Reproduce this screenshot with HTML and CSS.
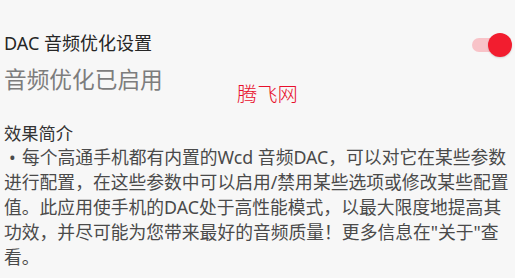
FILE: index.html
```html
<!DOCTYPE html>
<html lang="zh">

<head>
    <meta charset="UTF-8">
    <meta name="viewport" content="width=device-width, initial-scale=1.0">
    <title>DAC 音频优化设置</title>
    <link rel="stylesheet" href="styles.css">
</head>

<body>
    <section class="setting">
        <div class="setting-row">
            <h2 class="setting-title">DAC 音频优化设置</h2>
            <span class="switch on"><span class="thumb"></span></span>
        </div>
        <div class="status">音频优化已启用</div>
        <div class="watermark">腾飞网</div>
    </section>
    <section class="intro">
        <h3 class="intro-title">效果简介</h3>
        <p class="intro-text"><span class="bullet">•</span>每个高通手机都有内置的Wcd 音频DAC，可以对它在某些参数<br>进行配置，在这些参数中可以启用/禁用某些选项或修改某些配置<br>值。此应用使手机的DAC处于高性能模式，以最大限度地提高其<br>功效，并尽可能为您带来最好的音频质量！更多信息在"关于"查<br>看。</p>
    </section>
</body>

</html>
```
FILE: styles.css
```css
* {
    padding: 0;
    margin: 0;
    box-sizing: border-box;
}

body {
    background-color: #f7f7f7;
    font-family: "Noto Sans", "Noto Sans CJK SC", sans-serif;
    color: #222;
    width: 515px;
    height: 278px;
    overflow: hidden;
}

.setting {
    padding: 30px 0 0 4px;
}

.setting-row {
    display: flex;
    align-items: center;
    justify-content: space-between;
    padding-right: 3px;
    height: 24px;
}

.setting-title {
    font-size: 18px;
    font-weight: 400;
    color: #262626;
}

.switch {
    position: relative;
    display: inline-block;
    width: 40px;
    height: 14px;
    margin-top: 6px;
}

.switch::before {
    content: "";
    position: absolute;
    left: 0;
    top: 0;
    width: 30px;
    height: 14px;
    border-radius: 7px;
    background-color: #f8c3c8;
}

.switch .thumb {
    position: absolute;
    right: 0;
    top: -5px;
    width: 24px;
    height: 24px;
    border-radius: 50%;
    background-color: #f21d2f;
    box-shadow: 0 1px 2px rgba(0, 0, 0, 0.15);
}

.status {
    font-size: 22.7px;
    color: #7d7d7d;
    margin-top: 10px;
    line-height: 32px;
}

.watermark {
    font-family: "Noto Sans CJK SC", serif;
    font-weight: 300;
    font-size: 20.3px;
    color: #e8102c;
    margin: -17px 0 0 233px;
    line-height: 28px;
}

.intro {
    padding: 16px 0 0 4px;
}

.intro-title {
    font-size: 17.3px;
    font-weight: 400;
    color: #333;
    line-height: 22px;
}

.intro-text {
    font-size: 17.8px;
    color: #4a4a4a;
    line-height: 25px;
    white-space: nowrap;
}

.bullet {
    display: inline-block;
    width: 18px;
    padding-left: 5px;
}
```
